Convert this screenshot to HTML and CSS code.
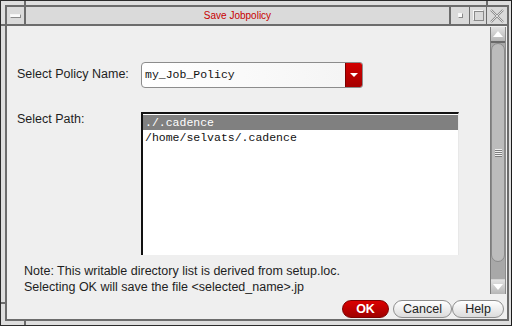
FILE: index.html
```html
<!DOCTYPE html>
<html lang="en">
<head>
  <meta charset="UTF-8">
  <title>Save Jobpolicy</title>
  <link rel="stylesheet" href="styles.css">
</head>
<body>
  <div class="window">
    <!-- frame resize handles -->
    <span class="handle h-top-left"></span>
    <span class="handle h-top-right"></span>
    <span class="handle h-left-top"></span>
    <span class="handle h-left-bottom"></span>
    <span class="handle h-bottom-left"></span>

    <div class="frame">
      <div class="titlebar">
        <div class="tb-btn menu-btn"><span class="dash"></span></div>
        <div class="title">Save Jobpolicy</div>
        <div class="tb-btn min-btn"><span class="dot"></span></div>
        <div class="tb-btn max-btn"><span class="box"></span></div>
        <div class="tb-btn close-btn">
          <svg width="14" height="14" viewBox="0 0 14 14">
            <path d="M1 1 L13 13 M13 1 L1 13" stroke="#8a8a8a" stroke-width="2.2" fill="none"/>
            <path d="M1 1 L13 13 M13 1 L1 13" stroke="#f4f4f4" stroke-width="0.8" fill="none"/>
          </svg>
        </div>
      </div>

      <div class="client">
        <div class="scroll-area">
          <div class="form">
            <div class="row row-name">
              <label class="field-label">Select Policy Name:</label>
              <div class="combo">
                <span class="combo-value">my_Job_Policy</span>
                <span class="combo-arrow"><span class="tri-down"></span></span>
              </div>
            </div>
            <div class="row row-path">
              <label class="field-label">Select Path:</label>
              <ul class="list">
                <li class="selected">./.cadence</li>
                <li>/home/selvats/.cadence</li>
              </ul>
            </div>
            <p class="note">Note: This writable directory list is derived from setup.loc.<br>Selecting OK will save the file &lt;selected_name&gt;.jp</p>
          </div>

          <div class="scrollbar">
            <div class="sb-btn"><span class="tri-up"></span></div>
            <div class="sb-thumb"><span class="grip"></span></div>
            <div class="sb-track"></div>
            <div class="sb-btn sb-btn-down"><span class="tri-down small"></span></div>
          </div>
        </div>

        <div class="buttons">
          <button class="pill ok-btn">OK</button>
          <button class="pill cancel-btn">Cancel</button>
          <button class="pill help-btn">Help</button>
        </div>
      </div>
    </div>
  </div>
</body>
</html>
```

FILE: styles.css
```css
:root {
  --frame-bg: #dedede;
  --frame-line: #6c6c6c;
  --client-bg: #efefef;
  --title-red: #c80000;
  --text: #1e1e1e;
}

html, body {
  margin: 0;
  padding: 0;
  background: var(--frame-bg);
}

/* Window frame */
.window {
  position: relative;
  width: 512px;
  height: 326px;
  box-sizing: border-box;
  border: 1px solid #2c2c2c;
  border-right-color: #1a1a1a;
  padding: 4px 2px 4px 4px;
  background: var(--frame-bg);
}

.handle {
  position: absolute;
  background: var(--frame-line);
}

.h-top-left { left: 23px; top: 0; width: 2px; height: 4px; }
.h-top-right { left: 485px; top: 0; width: 2px; height: 4px; }
.h-left-top { left: 0; top: 23px; width: 4px; height: 2px; }
.h-left-bottom { left: 0; top: 301px; width: 4px; height: 2px; }
.h-bottom-left { left: 23px; bottom: 0; width: 2px; height: 4px; }

.frame {
  height: 100%;
  box-sizing: border-box;
  border: 2px solid var(--frame-line);
  display: flex;
  flex-direction: column;
}

/* Title bar */
.titlebar {
  height: 17px;
  flex: none;
  display: flex;
  border-bottom: 2px solid var(--frame-line);
  background: #dadada;
}

.tb-btn {
  flex: none;
  display: flex;
  align-items: center;
  justify-content: center;
}

.menu-btn {
  width: 17px;
  border-right: 2px solid var(--frame-line);
}

.dash {
  width: 9px;
  height: 2px;
  background: #fafafa;
  border: 1px solid #8a8a8a;
  border-top-color: #f4f4f4;
  border-left-color: #f4f4f4;
}

.title {
  flex: 1;
  text-align: center;
  font-family: "Liberation Sans", Arial, sans-serif;
  font-size: 10px;
  line-height: 17px;
  color: var(--title-red);
}

.min-btn {
  width: 18px;
  border-left: 2px solid var(--frame-line);
}

.dot {
  width: 3px;
  height: 3px;
  background: #fafafa;
  border: 1px solid #8a8a8a;
  border-top-color: #f6f6f6;
  border-left-color: #f6f6f6;
}

.max-btn {
  width: 16px;
  border-left: 1px solid var(--frame-line);
}

.box {
  width: 9px;
  height: 9px;
  border: 1px solid #8a8a8a;
  border-top-color: #f6f6f6;
  border-left-color: #f6f6f6;
  box-shadow: inset 1px 1px 0 #8a8a8a;
}

.close-btn {
  width: 20px;
  border-left: 1px solid var(--frame-line);
}

/* Client area */
.client {
  flex: 1;
  display: flex;
  flex-direction: column;
  background: var(--client-bg);
}

.scroll-area {
  height: 270px;
  display: flex;
}

.form {
  flex: 1;
  padding: 36px 0 0 10px;
  font-family: "Liberation Sans", Arial, sans-serif;
  color: var(--text);
}

.row {
  display: flex;
}

.field-label {
  width: 124px;
  flex: none;
  font-size: 12.5px;
}

.row-name {
  height: 26px;
  align-items: center;
}

.row-name .field-label {
  padding-bottom: 2px;
}

.row-path {
  margin-top: 24px;
}

.row-path .field-label {
  line-height: 14px;
}

/* Combo box */
.combo {
  width: 222px;
  height: 26px;
  box-sizing: border-box;
  display: flex;
  border: 1px solid #8c8c8c;
  border-radius: 4px 3px 3px 4px;
  background: linear-gradient(to right, #ffffff, #f4f4f4);
  overflow: hidden;
}

.combo-value {
  flex: 1;
  padding-left: 3px;
  font-family: "Liberation Mono", "Courier New", monospace;
  font-size: 11.5px;
  line-height: 24px;
  color: #111;
}

.combo-arrow {
  width: 16px;
  display: flex;
  align-items: center;
  justify-content: center;
  background: linear-gradient(to bottom, #d20000, #a50000);
  border-left: 1px solid #7a0000;
}

.tri-down {
  width: 0;
  height: 0;
  border-left: 4px solid transparent;
  border-right: 4px solid transparent;
  border-top: 4px solid #ffffff;
}

.tri-down.small {
  border-left-width: 5px;
  border-right-width: 5px;
  border-top: 6px solid #ffffff;
}

/* Path list */
.list {
  width: 318px;
  height: 143px;
  box-sizing: border-box;
  margin: 0;
  padding: 1px 0 0;
  list-style: none;
  background: #ffffff;
  border-top: 2px solid #111;
  border-left: 2px solid #111;
  border-right: 1px solid #e8e8e8;
  font-family: "Liberation Mono", "Courier New", monospace;
  font-size: 11.5px;
  line-height: 15px;
  color: #111;
}

.list li {
  padding-left: 2px;
}

.list li.selected {
  background: #808080;
  color: #ffffff;
}

.note {
  margin: 8px 0 0;
  padding-left: 7px;
  font-size: 12.5px;
  line-height: 16px;
}

/* Scrollbar */
.scrollbar {
  width: 14px;
  margin: 1px 1px 2px 0;
  display: flex;
  flex-direction: column;
  background: #a8a8a8;
  border-left: 1px solid #7c7c7c;
  border-right: 1px solid #8c8c8c;
}

.sb-btn {
  height: 14px;
  flex: none;
  display: flex;
  align-items: center;
  justify-content: center;
  background: linear-gradient(to bottom, #e2e2e2, #b6b6b6);
  border-bottom: 2px solid #6a6a6a;
}

.sb-btn-down {
  border-bottom: none;
  border-top: 1px solid #d4d4d4;
}

.tri-up {
  width: 0;
  height: 0;
  border-left: 5px solid transparent;
  border-right: 5px solid transparent;
  border-bottom: 6px solid #ffffff;
}

.sb-thumb {
  height: 219px;
  flex: none;
  box-sizing: border-box;
  border: 1px solid #8a8a8a;
  border-radius: 7px;
  background: #bcbcbc;
  display: flex;
  align-items: center;
  justify-content: center;
}

.grip {
  width: 7px;
  height: 1px;
  background: #f0f0f0;
  box-shadow: 0 2px 0 #f0f0f0, 0 4px 0 #f0f0f0, 0 6px 0 #f0f0f0,
              0 1px 0 #7c7c7c, 0 3px 0 #7c7c7c, 0 5px 0 #7c7c7c, 0 7px 0 #7c7c7c;
  margin-top: -6px;
}

.sb-track {
  flex: 1;
}

/* Button row */
.buttons {
  height: 18px;
  margin-top: 4px;
  padding: 0 3px 1px 0;
  display: flex;
  justify-content: flex-end;
  align-items: center;
}

.pill {
  height: 18px;
  padding: 0;
  border: 1px solid #8e8e8e;
  border-radius: 9px;
  background: linear-gradient(to bottom, #ffffff, #dcdcdc);
  font-family: "Liberation Sans", Arial, sans-serif;
  font-size: 12.5px;
  line-height: 16px;
  color: #222;
}

.ok-btn {
  width: 47px;
  margin-right: 4px;
  border-color: #7c0000;
  background: linear-gradient(to bottom, #dc0000, #a00000);
  color: #ffffff;
  font-weight: bold;
}

.cancel-btn {
  width: 59px;
}

.help-btn {
  width: 52px;
}
```
